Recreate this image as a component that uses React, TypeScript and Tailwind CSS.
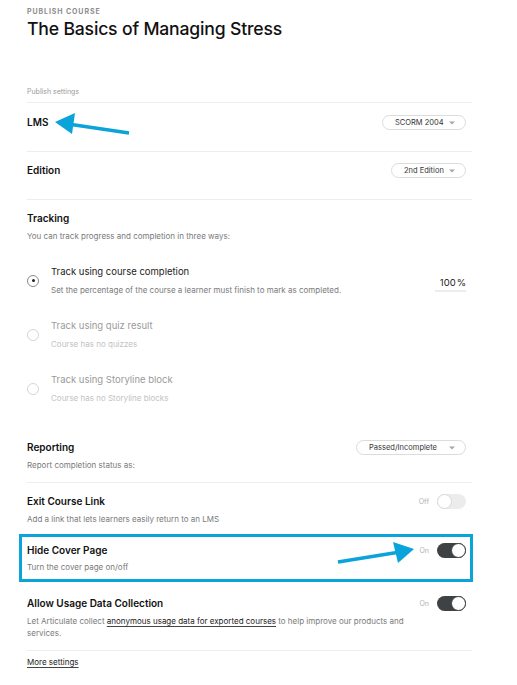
import React from "react";

const font = { fontFamily: "Inter, 'Noto Sans', sans-serif" };

function Caret() {
  return (
    <svg width="6" height="4" viewBox="0 0 6 4" className="shrink-0">
      <path d="M0 0.5 L6 0.5 L3 3.5 Z" fill="#a8a8a8" />
    </svg>
  );
}

function Dropdown({ label, w }: { label: string; w: string }) {
  return (
    <div
      className={`${w} h-[15px] rounded-full border border-[#dcdcdc] flex items-center justify-between pl-[12px] pr-[10px] text-[7.5px] text-[#333] leading-none`}
    >
      <span>{label}</span>
      <Caret />
    </div>
  );
}

function Toggle({ on }: { on: boolean }) {
  return (
    <div className="flex items-center gap-[8px]">
      <span className="text-[7px] text-[#b0b0b0] leading-none">{on ? "On" : "Off"}</span>
      <div
        className={`w-[29px] h-[15px] rounded-full relative ${on ? "bg-[#3f4245]" : "bg-[#ececec]"}`}
      >
        <div
          className={`absolute top-0 w-[15px] h-[15px] rounded-full bg-white border ${on ? "right-0 border-[#3f4245]" : "left-0 border-[#d8d8d8]"}`}
        />
      </div>
    </div>
  );
}

function Radio({ selected, disabled }: { selected?: boolean; disabled?: boolean }) {
  return (
    <div
      className={`w-[12px] h-[12px] rounded-full border flex items-center justify-center shrink-0 ${disabled ? "border-[#d6d6d6]" : "border-[#8a8a8a]"}`}
    >
      {selected && <div className="w-[3px] h-[3px] rounded-full bg-[#222]" />}
    </div>
  );
}

function Divider({ className = "" }: { className?: string }) {
  return <div className={`h-px bg-[#ededed] w-[445px] ${className}`} />;
}

export default function App() {
  return (
    <div className="relative w-[517px] h-[685px] bg-white overflow-hidden" style={font}>
      <div className="pl-[27px] pt-[7px]">
        <div className="text-[7px] font-bold tracking-[0.13em] text-[#8d8d8d] leading-[10px]">
          PUBLISH COURSE
        </div>
        <div className="text-[17.6px] font-medium text-[#111] leading-[24px] tracking-[-0.01em]">
          The Basics of Managing Stress
        </div>
        <div className="mt-[46px] text-[7px] text-[#9a9a9a] leading-[10px]">Publish settings</div>
        <Divider className="mt-[5px]" />

        {/* LMS */}
        <div className="h-[48px] pt-[12px] w-[439px] flex items-start justify-between">
          <div className="h-[15px] flex items-center text-[10px] font-semibold text-[#111]">LMS</div>
          <Dropdown label="SCORM 2004" w="w-[84px]" />
        </div>
        <Divider />

        {/* Edition */}
        <div className="h-[47px] pt-[11px] w-[439px] flex items-start justify-between">
          <div className="h-[15px] flex items-center text-[10px] font-semibold text-[#111]">Edition</div>
          <Dropdown label="2nd Edition" w="w-[75px]" />
        </div>
        <Divider />

        {/* Tracking */}
        <div className="pt-[11px] w-[439px]">
          <div className="text-[10px] font-semibold text-[#111] leading-[14px]">Tracking</div>
          <div className="mt-[5px] text-[8px] text-[#7a7a7a] leading-[12px]">
            You can track progress and completion in three ways:
          </div>

          <div className="mt-[23px] flex items-center">
            <div className="w-[24px] flex">
              <Radio selected />
            </div>
            <div className="flex-1">
              <div className="text-[9.5px] text-[#222] leading-[14px]">Track using course completion</div>
              <div className="mt-[5px] text-[8px] text-[#7a7a7a] leading-[12px]">
                Set the percentage of the course a learner must finish to mark as completed.
              </div>
            </div>
            <div className="self-end mb-[4px] w-[31px] border-b-2 border-[#ececec] text-right text-[9.5px] text-[#222] leading-[13px] pb-[1px]">
              100<span className="ml-[1px]">%</span>
            </div>
          </div>

          <div className="mt-[23px] flex items-center">
            <div className="w-[24px] flex">
              <Radio disabled />
            </div>
            <div className="flex-1">
              <div className="text-[9.5px] text-[#9a9a9a] leading-[14px]">Track using quiz result</div>
              <div className="mt-[5px] text-[8px] text-[#c2c2c2] leading-[12px]">Course has no quizzes</div>
            </div>
          </div>

          <div className="mt-[23px] flex items-center">
            <div className="w-[24px] flex">
              <Radio disabled />
            </div>
            <div className="flex-1">
              <div className="text-[9.5px] text-[#9a9a9a] leading-[14px]">Track using Storyline block</div>
              <div className="mt-[5px] text-[8px] text-[#c2c2c2] leading-[12px]">Course has no Storyline blocks</div>
            </div>
          </div>

          {/* Reporting */}
          <div className="mt-[36px] flex items-center justify-between">
            <div className="text-[10px] font-semibold text-[#111] leading-[15px]">Reporting</div>
            <Dropdown label="Passed/Incomplete" w="w-[110px]" />
          </div>
          <div className="mt-[4px] text-[8px] text-[#7a7a7a] leading-[12px]">Report completion status as:</div>
        </div>
        <Divider className="mt-[11px]" />

        {/* Exit course link */}
        <div className="pt-[11px] w-[439px]">
          <div className="flex items-center justify-between">
            <div className="text-[10px] font-semibold text-[#111] leading-[15px]">Exit Course Link</div>
            <Toggle on={false} />
          </div>
          <div className="mt-[4px] text-[8px] text-[#7a7a7a] leading-[12px]">
            Add a link that lets learners easily return to an LMS
          </div>
        </div>

        {/* Hide cover page */}
        <div className="mt-[18px] w-[439px] relative">
          <div className="absolute left-[-8px] right-[-7px] top-[-9px] h-[48px] border-[3px] border-[#0aa3da]" />
          <div className="flex items-center justify-between">
            <div className="text-[10px] font-semibold text-[#111] leading-[15px]">Hide Cover Page</div>
            <Toggle on />
          </div>
          <div className="mt-[3px] text-[8px] text-[#7a7a7a] leading-[12px]">Turn the cover page on/off</div>
        </div>

        {/* Allow usage */}
        <div className="mt-[23px] w-[439px]">
          <div className="flex items-center justify-between">
            <div className="text-[10px] font-semibold text-[#111] leading-[15px]">Allow Usage Data Collection</div>
            <Toggle on />
          </div>
          <p className="mt-[4px] text-[8px] text-[#7a7a7a] leading-[12px] w-[380px]">
            Let Articulate collect{" "}
            <a className="text-[#222] underline underline-offset-[2px] decoration-[#444]">
              anonymous usage data for exported courses
            </a>{" "}
            to help improve our products and services.
          </p>
        </div>
        <Divider className="mt-[11px]" />
        <div className="mt-[5px] text-[8px] text-[#222] leading-[12px] underline underline-offset-[2px] decoration-[#444]">
          More settings
        </div>
      </div>

      {/* Annotation arrows */}
      <svg className="absolute inset-0 pointer-events-none" width="517" height="685" viewBox="0 0 517 685">
        <line x1="129" y1="133" x2="68" y2="124" stroke="#0aa3da" strokeWidth="3.5" />
        <polygon points="55,122 75,113 72,134" fill="#0aa3da" />
        <line x1="338" y1="562" x2="400" y2="552" stroke="#0aa3da" strokeWidth="3.5" />
        <polygon points="414,549 393,542 398,563" fill="#0aa3da" />
      </svg>
    </div>
  );
}
